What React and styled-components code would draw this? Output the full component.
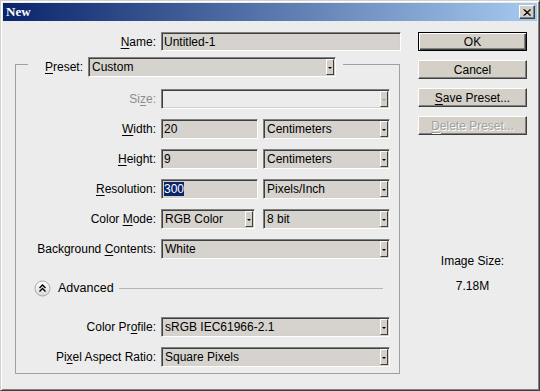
import React from 'react';
import styled, { createGlobalStyle } from 'styled-components';

const GlobalStyle = createGlobalStyle`
  html, body { margin: 0; padding: 0; background: #ececec; }
  body {
    font-family: "Liberation Sans", Arial, sans-serif;
    font-size: 12px;
    color: #000;
  }
  * { box-sizing: border-box; }
`;

// --- window frame ---
const Window = styled.div`
  width: 540px;
  height: 391px;
  display: flex;
  flex-direction: column;
  background: #ececec;
  border: 1px solid;
  border-color: #d4d0c8 #404040 #404040 #d4d0c8;
  box-shadow: inset 1px 1px 0 #fff, inset -1px -1px 0 #808080;
  padding: 2px;
`;

const TitleBar = styled.div`
  height: 18px;
  flex: none;
  display: flex;
  align-items: center;
  justify-content: space-between;
  padding: 0 2px 0 3px;
  background: linear-gradient(90deg, #0a246a 0%, #a6caf0 100%);
`;

const Title = styled.span`
  color: #fff;
  font: bold 13px "Liberation Serif", serif;
`;

const CloseButton = styled.div`
  width: 16px;
  height: 14px;
  background: #d4d0c8;
  border: 1px solid;
  border-color: #fff #404040 #404040 #fff;
  box-shadow: inset -1px -1px 0 #808080;
  display: flex;
  align-items: center;
  justify-content: center;
`;

const Body = styled.div`
  flex: 1;
  display: flex;
  gap: 17px;
  padding: 11px 10px 0 12px;
`;

const LeftColumn = styled.div`
  width: 386px;
  display: flex;
  flex-direction: column;
`;

const NameRow = styled.div`
  display: grid;
  grid-template-columns: 141px 240px;
  column-gap: 5px;
  align-items: center;
`;

const Label = styled.span`
  text-align: right;
  white-space: nowrap;
  color: ${(p) => (p.$disabled ? '#8c8c8c' : '#000')};
`;

const Key = styled.span`
  text-decoration: underline;
  text-underline-offset: 2px;
`;

// --- group box ---
const GroupBox = styled.fieldset`
  width: 385px;
  margin: 0;
  min-width: 0;
  border: 1px solid #a0a0a0;
  padding: 12px 9px 6px 0;
`;

const Legend = styled.legend`
  margin-left: 12px;
  padding: 6px 7px 0 17px;
  display: flex;
  align-items: center;
  gap: 5px;
`;

const Rows = styled.div`
  display: flex;
  flex-direction: column;
  gap: 10px;
`;

const Row = styled.div`
  display: grid;
  grid-template-columns: 140px 229px;
  column-gap: 5px;
  align-items: center;
`;

const Pair = styled.div`
  display: grid;
  grid-template-columns: ${(p) => p.$first}px 127px;
  justify-content: space-between;
`;

// --- sunken fields ---
const Field = styled.div`
  height: ${(p) => p.$h || 20}px;
  width: ${(p) => (p.$w ? `${p.$w}px` : 'auto')};
  display: flex;
  align-items: center;
  padding: ${(p) => (p.$select ? '0 1px 0 2px' : '0 2px')};
  background: ${(p) => (p.$disabled ? '#ececec' : '#d6d3ce')};
  border: 1px solid;
  border-color: #808080 #fff #fff #808080;
  box-shadow: inset 1px 1px 0 #404040, inset -1px -1px 0 #d4d0c8;
  white-space: nowrap;
  overflow: hidden;
`;

const Value = styled.span`
  flex: 1;
  padding-left: 1px;
`;

const Selected = styled.span`
  background: #0a246a;
  color: #fff;
`;

const DropButton = styled.span`
  width: 8px;
  height: 16px;
  flex: none;
  display: flex;
  align-items: center;
  justify-content: center;
  background: #d4d0c8;
  border: 1px solid;
  border-color: #fff #404040 #404040 #fff;
`;

const Arrow = styled.span`
  width: 0;
  height: 0;
  margin-top: 1px;
  border-left: 2px solid transparent;
  border-right: 2px solid transparent;
  border-top: 2px solid ${(p) => (p.$disabled ? '#a0a0a0' : '#000')};
`;

// --- advanced ---
const AdvancedRow = styled.div`
  height: 20px;
  margin: 19px 7px 19px 18px;
  display: flex;
  align-items: center;
  gap: 7px;
  font-size: 12.5px;
`;

const Rule = styled.div`
  flex: 1;
  height: 1px;
  margin-left: -2px;
  background: #b4b4b4;
`;

// --- buttons ---
const RightColumn = styled.div`
  width: 109px;
  display: flex;
  flex-direction: column;
  gap: 9px;
`;

const Button = styled.div`
  height: 19px;
  display: flex;
  align-items: center;
  justify-content: center;
  background: #d4d0c8;
  color: ${(p) => (p.$disabled ? '#a0a0a0' : '#000')};
  text-shadow: ${(p) => (p.$disabled ? '1px 1px 0 #fff' : 'none')};
  border: 1px solid;
  border-color: ${(p) => (p.$default ? '#000' : '#fff #404040 #404040 #fff')};
  box-shadow: ${(p) =>
    p.$default
      ? 'inset 1px 1px 0 #fff, inset -1px -1px 0 #404040, inset -2px -2px 0 #808080'
      : 'inset -1px -1px 0 #808080'};
`;

const ImageSize = styled.div`
  margin-top: 110px;
  display: flex;
  flex-direction: column;
  align-items: center;
  gap: 11px;
  line-height: 14px;
`;

function Dropdown({ value, disabled, w }) {
  return (
    <Field $select $disabled={disabled} $w={w}>
      <Value>{value}</Value>
      <DropButton>
        <Arrow $disabled={disabled} />
      </DropButton>
    </Field>
  );
}

function AdvancedIcon() {
  return (
    <svg width="17" height="17" viewBox="0 0 17 17">
      <defs>
        <linearGradient id="adv" x1="0" y1="0" x2="0" y2="1">
          <stop offset="0" stopColor="#ffffff" />
          <stop offset="1" stopColor="#d8d8d8" />
        </linearGradient>
      </defs>
      <circle cx="8.5" cy="8.5" r="7.5" fill="url(#adv)" stroke="#a8a8a8" />
      <path d="M5.5 8 L8.5 5 L11.5 8 M5.5 11.5 L8.5 8.5 L11.5 11.5" fill="none" stroke="#000" strokeWidth="1.4" />
    </svg>
  );
}

export default function App() {
  return (
    <>
      <GlobalStyle />
      <Window>
        <TitleBar>
          <Title>New</Title>
          <CloseButton>
            <svg width="8" height="7" viewBox="0 0 8 7">
              <path d="M0.5 0.5 L7 6.5 M1.5 0.5 L8 6.5 M7 0.5 L0.5 6.5 M8 0.5 L1.5 6.5" stroke="#000" strokeWidth="1" />
            </svg>
          </CloseButton>
        </TitleBar>

        <Body>
          <LeftColumn>
            <NameRow>
              <Label><Key>N</Key>ame:</Label>
              <Field $h={19}>Untitled-1</Field>
            </NameRow>

            <GroupBox>
              <Legend>
                <Label><Key>P</Key>reset:</Label>
                <Dropdown value="Custom" w={248} />
              </Legend>

              <Rows>
                <Row>
                  <Label $disabled>Si<Key>z</Key>e:</Label>
                  <Dropdown value="" disabled />
                </Row>
                <Row>
                  <Label><Key>W</Key>idth:</Label>
                  <Pair $first={97}>
                    <Field>20</Field>
                    <Dropdown value="Centimeters" />
                  </Pair>
                </Row>
                <Row>
                  <Label><Key>H</Key>eight:</Label>
                  <Pair $first={97}>
                    <Field>9</Field>
                    <Dropdown value="Centimeters" />
                  </Pair>
                </Row>
                <Row>
                  <Label><Key>R</Key>esolution:</Label>
                  <Pair $first={97}>
                    <Field><Selected>300</Selected></Field>
                    <Dropdown value="Pixels/Inch" />
                  </Pair>
                </Row>
                <Row>
                  <Label>Color <Key>M</Key>ode:</Label>
                  <Pair $first={94}>
                    <Dropdown value="RGB Color" />
                    <Dropdown value="8 bit" />
                  </Pair>
                </Row>
                <Row>
                  <Label>Background <Key>C</Key>ontents:</Label>
                  <Dropdown value="White" />
                </Row>
              </Rows>

              <AdvancedRow>
                <AdvancedIcon />
                <span>Advanced</span>
                <Rule />
              </AdvancedRow>

              <Rows>
                <Row>
                  <Label>Color Pr<Key>o</Key>file:</Label>
                  <Dropdown value="sRGB IEC61966-2.1" />
                </Row>
                <Row>
                  <Label>Pi<Key>x</Key>el Aspect Ratio:</Label>
                  <Dropdown value="Square Pixels" />
                </Row>
              </Rows>
            </GroupBox>
          </LeftColumn>

          <RightColumn>
            <Button $default>OK</Button>
            <Button>Cancel</Button>
            <Button><Key>S</Key>ave Preset...</Button>
            <Button $disabled><Key>D</Key>elete Preset...</Button>
            <ImageSize>
              <span>Image Size:</span>
              <span>7.18M</span>
            </ImageSize>
          </RightColumn>
        </Body>
      </Window>
    </>
  );
}
